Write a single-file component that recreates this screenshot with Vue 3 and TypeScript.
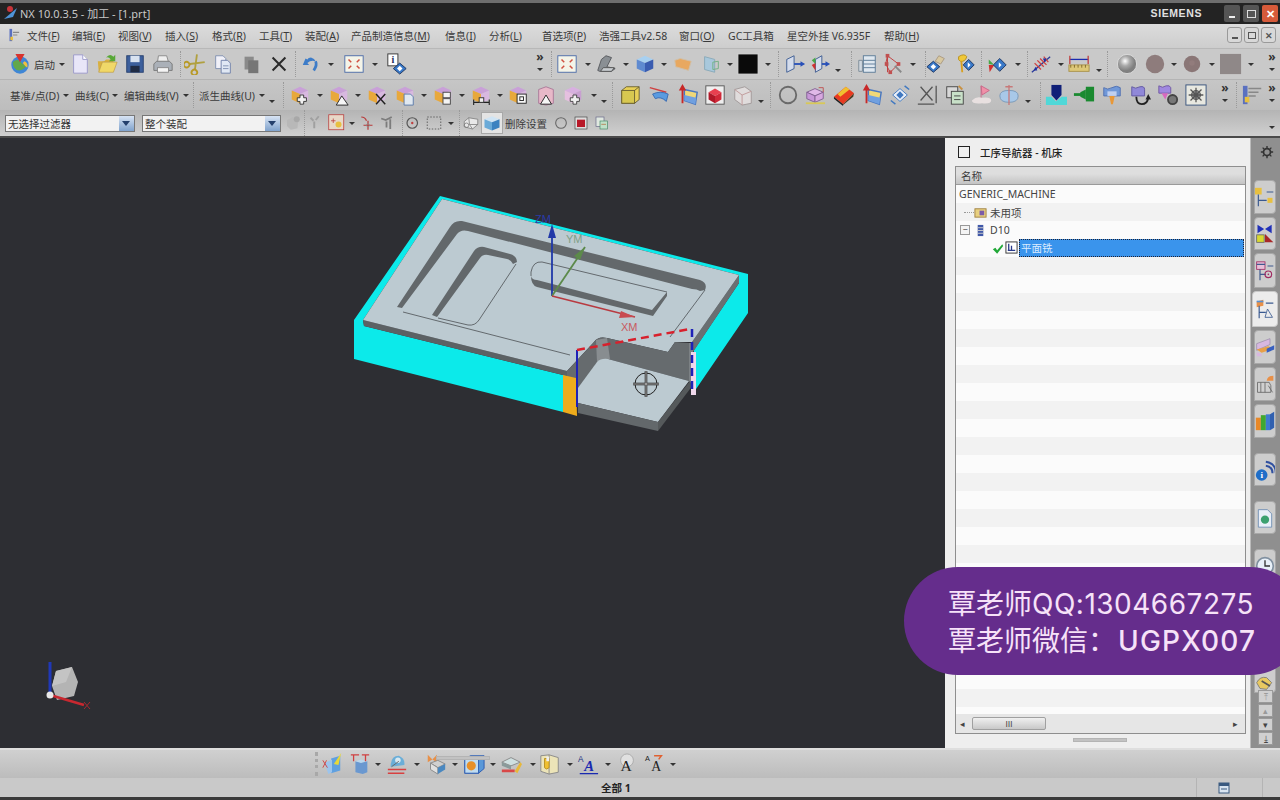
<script setup lang="ts">
type Item = { x: number; icon?: string; kind?: 'arrow' | 'low' | 'sep' | 'more' | 'text' | 'grip'; text?: string; w?: number; box?: boolean }
type Placed = Item & { w: number; gap: number }

const poly = (p: string, f: string, extra = '') => `<polygon points="${p}" fill="${f}" ${extra}/>`
const path = (d: string, f: string, s = 'none', sw = 1) => `<path d="${d}" fill="${f}" stroke="${s}" stroke-width="${sw}"/>`
const rect = (x: number, y: number, w: number, h: number, f: string, s = 'none') => `<rect x="${x}" y="${y}" width="${w}" height="${h}" fill="${f}" stroke="${s}"/>`
const circ = (x: number, y: number, r: number, f: string, s = 'none', sw = 1) => `<circle cx="${x}" cy="${y}" r="${r}" fill="${f}" stroke="${s}" stroke-width="${sw}"/>`
const line = (d: string, s: string, sw = 1) => path(d, 'none', s, sw)

const cube = (t: string, l: string, r: string) =>
  poly('3,7 12,3 21,7 12,11', t) + poly('3,7 12,11 12,21 3,17', l) + poly('12,11 21,7 21,17 12,21', r)
const nxCube = cube('#c9a0d8', '#e8a83c', '#d8b8e0')
const pinkCube = cube('#d8b0e0', '#e6c0e0', '#c8a0d0')

const icons: Record<string, string> = {
  logo: circ(12, 13, 9.5, '#3f86d6') + path('M4 10q5-5 9 0t7 1q-2 8-9 8-6 0-7-9z', '#62a84a') + path('M7 1h10l-5 9z', '#d8322e') + path('M17 9q4 2 3 7-3-2-5-5z', '#f0c040'),
  new: path('M5 2h10l5 5v15H5z', '#e8e6f8', '#9a98c8') + path('M15 2v5h5', '#fff', '#9a98c8'),
  open: path('M2 9h7l2-2h8v3H7L3 21z', '#d8b040') + poly('3,21 7,10 23,10 19,21', '#f0d868', 'stroke="#b89030" stroke-width=".6"') + path('M11 5q4-5 8-1l2-2v7h-7l2-2q-2-3-5-2z', '#58a838'),
  save: rect(3, 3, 18, 18, '#3c5f9c', '#27406e') + rect(7, 3, 10, 7, '#d8e2f0') + rect(7, 14, 10, 7, '#202c44'),
  print: path('M7 3h9l2 7H6z', '#eee', '#888') + path('M2 12l3-3h14l3 3v7H2z', '#aab0b8', '#777') + rect(6, 16, 12, 5, '#f4f4f4', '#888'),
  cut: '<g transform="rotate(45 12 12)">' + line('M6 3l10 13M18 3L8 16', '#b0a040', 2) + circ(6, 19, 3, 'none', '#b89a28', 2) + circ(18, 19, 3, 'none', '#b89a28', 2) + '</g>',
  copy: path('M4 3h8l3 3v11H4z', '#f0f0f8', '#7f8fb0') + path('M10 8h7l3 3v11H10z', '#e0e8f4', '#6f80a8') + line('M12 14h6M12 17h6', '#7f8fb0'),
  paste: rect(5, 4, 10, 14, '#8a8a8a') + rect(9, 8, 11, 14, '#767676'),
  del: line('M5 5l14 14M19 5L5 19', '#2a2a2a', 2.2),
  undo: path('M6 6l-3 7 7 0-2-2q4-4 9-2-1-3-5-4-3 0-4 2z', '#3d7cc8') + line('M17 9q2 4-2 10', '#3d7cc8', 3),
  fit: rect(2, 3, 20, 18, '#f4f4e8', '#4a6aa8') + line('M6 7l3 3M18 7l-3 3M6 17l3-3M18 17l-3-3', '#d05040', 1.6),
  info: rect(2, 1, 11, 13, '#fff', '#333') + `<text x="7.5" y="11" font-size="11" font-weight="700" text-anchor="middle" font-family="Liberation Serif, serif" fill="#203060">i</text>` + poly('15,11 22,17 15,23 8,17', '#3878c8', 'stroke="#1d3560"') + poly('15,14 18,17 15,20 12,17', '#fff'),
  shade: path('M3 19l4-12 5-4 6 2-5 10 9 2-4 3H5z', '#8a8f94', '#55585c') + poly('9,16 21,16 18,20 6,20', '#c8ccd0', 'stroke="#555"'),
  bcube: cube('#a8d0f0', '#5f8ad0', '#3a5cb0'),
  fade: path('M3 8l6-2 12 3-3 10-14-4z', '#e8a860', '#d0c0a8'),
  pane: path('M5 4l11 3v14L5 18z', '#a8c8dc', '#88a8b8') + path('M14 10l6-1v8l-6 1z', 'none', '#70b080'),
  black: rect(1, 1, 22, 22, '#0a0a0a', '#dcdcdc'),
  mir1: path('M3 7l8-4v14l-8 4z', '#d4dcec', '#3a5a90') + line('M11 12h10', '#2850b8', 2) + poly('23,12 18,9 18,15', '#2850b8'),
  mir2: path('M7 7l7-4v14l-7 4z', '#d4dcec', '#3a5a90') + line('M14 12h6', '#2850b8', 2) + poly('23,12 18,9 18,15', '#2850b8') + poly('3,8 7,5 7,12', '#48a848') + poly('3,13 7,11 7,19', '#d03030'),
  list: path('M3 8h4v12H3z', '#d0d8e0', '#7a8a96') + rect(8, 3, 13, 18, '#dfe8f0', '#5a7a96') + line('M8 8h13M8 12h13M8 16h13', '#5a7a96'),
  tree: line('M6 3l12 9-9 9-5-9zM6 3v18', '#c03838') + rect(4, 1, 4, 4, '#c05050') + rect(16, 10, 4, 4, '#c05050') + rect(3, 10, 4, 4, '#c05050') + rect(7, 19, 4, 4, '#c05050') + line('M14 14l7 7', '#888', 2),
  key: path('M14 3l6 3-4 6-6-3z', '#d8c8a0', '#a89880') + poly('8,9 15,15 8,21 1,15', '#3878c8', 'stroke="#1d3560"') + poly('8,12 11,15 8,18 5,15', '#fff'),
  kdia: path('M5 4q6-4 9 0-2 6-7 5-3-1-2-5z', '#f0c838', '#b89020') + line('M8 9l1 12', '#d8a020', 2) + poly('16,7 22,13 16,19 10,13', '#3878c8', 'stroke="#1d3560"') + poly('15,10 18,13 15,16', '#fff'),
  arr3: poly('3,7 9,13 3,12', '#48a848') + poly('3,13 9,13 4,21', '#d03030') + poly('15,6 22,13 15,20 8,13', '#3878c8', 'stroke="#1d3560"') + poly('14,10 17,13 14,16', '#fff'),
  ruler: line('M2 21L22 4', '#2a3a9a', 1.4) + line('M5 11l7 7M8 8l7 7M11 6l7 7M15 4l5 6', '#d04040', 1.4) + poly('4,19 8,19 6,15', '#2030a0') + poly('18,6 14,6 16,10', '#2030a0'),
  meas: rect(1, 13, 22, 7, '#ddc878', '#a89048') + line('M3 13v3M7 13v3M11 13v3M15 13v3M19 13v3', '#806828') + line('M2 7h20', '#1a2ab0', 1.4) + line('M2 3v9M22 3v9', '#c04040', 1.4),
  sphere: `<defs><radialGradient id="sg" cx=".4" cy=".35"><stop offset="0" stop-color="#fff"/><stop offset=".5" stop-color="#aaa"/><stop offset="1" stop-color="#808080"/></radialGradient></defs>` + circ(12, 12, 10.5, 'url(#sg)', '#ddd'),
  dot1: circ(12, 12, 10, '#8e7c7c'),
  dot2: circ(12, 12, 9, '#8a7676') + circ(12, 11, 3, '#927c7c'),
  sq: rect(0, 1, 23, 22, '#8f8888'),
  c1: nxCube + path('M12 12h4v3h3v4h-3v3h-4v-3H9v-4h3z', '#f0f0f0', '#333'),
  c2: nxCube + poly('15,13 22,23 9,23', '#f6f6f6', 'stroke="#222"'),
  c3: nxCube + line('M11 11l10 11M21 11L11 22', '#222', 1.6),
  c4: nxCube + path('M11 11h7l3 3v9H11z', '#e0e8f0', '#5a7aa8'),
  c5: nxCube + rect(12, 9, 8, 6, '#f4f4f4', '#444') + rect(12, 16, 8, 6, '#f4f4f4', '#444'),
  c6: nxCube + line('M4 20h17M4 17v6M21 17v6', '#222', 1.2) + rect(10, 15, 5, 5, '#eee', '#333'),
  c7: nxCube + rect(11, 11, 10, 10, '#f8f8f8', '#222') + rect(14, 14, 4, 4, 'none', '#222'),
  c8: path('M4 6l8-3 8 3v15l-8 2-8-2z', '#e8b8c8', '#a87898') + poly('12,12 18,22 6,22', '#f6f6f6', 'stroke="#222"'),
  c9: pinkCube + path('M12 12h4v3h3v4h-3v3h-4v-3H9v-4h3z', '#f0f0f0', '#444'),
  yb: path('M3 7l5-4h14v14l-5 4H3z', '#e8d058', '#6a6030') + rect(3, 7, 14, 14, '#d8c850', '#6a6030') + line('M17 7l5-4', '#6a6030'),
  sw: path('M2 4l18 5', 'none', '#d04040', 1.6) + path('M5 11q8-4 17 0l-2 8q-6-6-12-3z', '#5a9be0', '#3a6ab0'),
  ext: path('M8 6l14 3-2 13L8 18z', '#f0d878', '#4a78c0', 1.6) + line('M6 21V3', '#c82828', 2) + poly('6,0 2,7 10,7', '#c82828') + path('M8 12l13 3-1 7-12-4z', '#70a0e0'),
  red: rect(2, 2, 20, 20, '#eee', '#555') + poly('5,9 12,5 19,9 12,13', '#e84050') + poly('5,9 12,13 12,21 5,17', '#b01828') + poly('12,13 19,9 19,17 12,21', '#d02838'),
  ghost: path('M3 6l11-3 7 5v13l-10 2-8-6z', '#e0dcdc', '#a09898') + line('M3 6l8 6v11M11 12l10-4', '#c09898'),
  ring: circ(12, 12, 9, 'none', '#6a6a6a', 2),
  pcube: poly('3,9 12,5 21,9 12,13', '#e0b8e8', 'stroke="#806090"') + poly('3,9 12,13 12,20 3,16', '#c898d8', 'stroke="#806090"') + poly('12,13 21,9 21,16 12,20', '#d8a8e0', 'stroke="#806090"') + rect(2, 20, 21, 2, '#d8c858') + line('M16 4h5v5', '#c05050'),
  stripe: poly('1,14 14,3 23,10 11,22', '#e83a20') + poly('5,11 14,3 18,6 8,14', '#f0c030') + poly('11,22 23,10 22,14 11,23', '#4a3a20') + poly('1,14 11,22 11,24 1,16', '#202020'),
  ext2: path('M8 6l14 3-2 13L8 18z', '#f0d878', '#4a78c0', 1.6) + line('M6 21V3', '#c82828', 2) + poly('6,0 2,7 10,7', '#c82828') + path('M8 12l13 3-1 7-12-4z', '#70a0e0'),
  diag: poly('12,5 20,12 12,19 4,12', '#e8eef8', 'stroke="#4078c0"') + poly('12,8 16,12 12,16 8,12', '#4078c0') + line('M17 2l5 4M2 18l5 4', '#4078c0', 1.6),
  xdim: line('M5 3l13 15M18 3L5 18M22 2v19M2 22h18', '#555', 1.4),
  cards: rect(3, 3, 12, 12, '#d8d8d8', '#444') + rect(8, 8, 13, 14, '#c8e0c8', '#444') + line('M11 13h7M11 17h7', '#444') + path('M16 2l4 4', 'none', '#c89040', 2),
  flag: path('M11 2l9 5-8 5z', '#f090a8', '#c86888') + line('M11 2v14', '#c86888') + path('M1 18q5-5 11-3 10-1 10 3t-10 3q-11 1-11-3z', '#e8e0e0'),
  mbox: path('M2 13q0-6 10-6t10 6q0 7-10 7T2 13z', '#a8c8e8', '#7898b8') + line('M12 1v22M8 3h8', '#c87878', 1.4),
  tool1: rect(7, 1, 11, 11, '#102078') + poly('7,12 18,12 12.5,18', '#102078') + poly('1,14 7,14 12,19 18,14 24,14 24,23 1,23', '#50d8d8'),
  tool2: rect(14, 3, 9, 16, '#1a8a30') + poly('14,6 14,17 8,14 8,9', '#1a8a30') + rect(1, 10, 8, 3, '#1a8a30'),
  tool3: path('M3 4q4 3 9 0t9 0v9H3z', '#7098d8', '#5070b0') + rect(7, 8, 10, 5, '#c0d0f0') + poly('9,13 15,13 13,22 11,22', '#e89838'),
  tool4: path('M3 3q4 3 9 0 5-1 5 3v7H3z', '#9088d8', '#6058a0') + line('M8 14q0 8 6 8t7-7', '#222', 2) + poly('21,11 24,17 18,17', '#222'),
  tool5: path('M2 2q4 3 8 0 4-1 5 2v6H2z', '#a088e0', '#7058a0') + poly('5,10 12,10 9,17', '#d868c0') + circ(17, 17, 5, '#777', '#444', 2),
  gear: rect(1, 1, 22, 22, '#e8e8e0', '#35507a') + circ(12, 12, 5, '#888', '#555') + line('M12 4v16M4 12h16M6 6l12 12M18 6L6 18', '#555', 1.4),
  wing: rect(1, 2, 5, 20, '#5a70c0') + rect(3, 14, 5, 6, '#e8c040') + line('M7 5h14M7 9h11M7 13h8', '#888', 1.6),
  gcube: path('M4 8l8-4 7 3-1 12-9 2-5-5z', '#b8b8b8') + circ(17, 7, 4, '#a8a8a8'),
  gray1: line('M2 5l4 4M13 3l-4 5M7 10v9', '#a0a0a0', 2.6),
  bpt: rect(1, 1, 20, 20, '#e8d8c8', '#b83838') + line('M7 6v6M4 9h6', '#b83838') + circ(14, 14, 4, '#e8c040'),
  redc: line('M3 4q5 0 7 5M12 9v12M6 15h12', '#b83838', 1.6) + circ(12, 15, 2, 'none', '#888'),
  gray2: line('M3 6l6 2 8-4M15 7v13M10 10v8', '#7c7c7c', 2.4),
  dotc: circ(11, 12, 7, 'none', '#555', 1.6) + circ(11, 12, 1.6, '#c04040'),
  dash: `<rect x="3" y="4" width="18" height="16" fill="none" stroke="#444" stroke-dasharray="2 2"/>`,
  sel1: path('M3 10l6-5 12 2v7l-7 6-11-3z', '#e8e8e8', '#777') + path('M9 5l1 9 11 0M10 14l4 6', 'none', '#777') + circ(6, 15, 3, 'none', '#777'),
  sel2: poly('2,7 12,3 22,7 12,11', '#cfe4f4') + poly('2,7 12,11 12,22 2,18', '#6aaad8') + poly('12,11 22,7 22,18 12,22', '#3c82c0'),
  ring2: circ(12, 12, 8, 'none', '#666', 1.6),
  rcube: rect(3, 3, 18, 18, '#ddd', '#444') + rect(6, 7, 12, 11, '#b81828'),
  mini: rect(3, 3, 12, 14, '#e0e8e0', '#668') + rect(9, 9, 11, 12, '#c0e0c8', '#486') + line('M11 14h7', '#b06030'),
  b1: path('M11 6l10-3v16l-10 3z', '#5fa0e0') + path('M4 11l8-4v14l-4 2z', '#9cc4ec') + line('M2 8l5 8M2 16l4-8', '#d04040') + poly('14,12 22,0 19,13', '#e8d838'),
  b2: path('M7 9h13v12l-5 2-8-2z', '#6a98d0') + path('M7 9l6-2 7 2-7 2z', '#bcd8ee') + line('M2 2h9M5 2v7M14 2h8M18 2v7', '#d04040', 1.4),
  b3: path('M5 15q0-12 9-12 7 3 6 10z', '#6aaed8') + circ(13, 8, 3, '#d8e8f0') + line('M2 18h20M2 22h18', '#d84040', 1.6) + line('M6 15L14 9', '#666'),
  b4: poly('3,2 8,7 3,10', '#e89048') + poly('13,2 8,7 13,10', '#e89048') + poly('6,11 14,8 22,12 14,16', '#d0d0d0', 'stroke="#888"') + poly('6,11 14,16 14,23 6,18', '#e0e0e0', 'stroke="#888"') + poly('14,16 22,12 22,18 14,23', '#4a88c0'),
  b5: poly('2,7 8,3 23,3 23,17 17,22 2,22', '#5a98d8', 'stroke="#2a5ab0"') + rect(2, 7, 15, 15, '#c0dcf0', '#2a5ab0') + circ(9, 14, 5, '#e89028'),
  b6: poly('2,10 12,5 22,10 12,14', '#cfe0e0', 'stroke="#888"') + poly('2,10 12,14 12,18 2,14', '#8a9a9a') + poly('2,18 16,18 16,21 2,21', '#d84848') + poly('16,20 22,10 24,12 19,22', '#e8b838'),
  b7: path('M2 3l9-1 10 3v16l-10 2-9-3z', '#ece4b8', '#888') + line('M11 2v21', '#888') + path('M6 6h5v10q-3 3-5 0z', '#f0c030', '#b89020') + rect(8, 4, 3, 5, '#eee'),
  a1: `<text x="1" y="10" font-size="9" font-family="Liberation Sans, sans-serif" fill="#203080">A</text><text x="8" y="20" font-size="16" font-weight="700" font-style="italic" font-family="Liberation Serif, serif" fill="#1a2ab0">A</text>` + line('M3 22.5h20', '#1a2ab0', 1.4),
  a2: circ(12, 8, 7, '#e0e0e0', '#aaa') + `<text x="5" y="20" font-size="17" font-family="Liberation Serif, serif" fill="#222">A</text>`,
  a3: `<text x="1" y="9" font-size="8" font-family="Liberation Sans, sans-serif" fill="#222">A</text><text x="8" y="20" font-size="15" font-family="Liberation Serif, serif" fill="#222">A</text>` + line('M11 3h8l-3 4', '#e06030', 1.6),
  t1: rect(0, 1, 8, 8, '#e8c040') + rect(15, 13, 6, 6, '#e8c040') + line('M4 9v14M4 16h10M14 6h8', '#3a5a90', 1.4),
  t2: poly('3,1 11,6 3,11', '#2030b8') + poly('20,1 12,6 20,11', '#2030b8') + rect(2, 13, 9, 9, '#d8d830', '#666') + poly('12,12 22,22 12,22', '#a82828'),
  t3: rect(2, 1, 10, 9, '#e8c0d8', '#a02860') + line('M2 4h10M15 6h7M6 10v13M6 16h7', '#405a90', 1.4) + circ(16, 16, 4, 'none', '#a02860', 1.4) + circ(16, 16, 1, '#a02860'),
  t4: poly('2,3 10,1 10,8 2,10', '#e89048') + rect(2, 2, 8, 2, '#5a90d0') + line('M5 8v15M5 16h8M13 5h9', '#3a5a90', 1.4) + poly('15,12 21,22 12,22', 'none', 'stroke="#3a5a90"'),
  t5: path('M2 8l16-6v7L2 16z', '#d8b8e0', '#a090b0') + path('M2 15l14-4 6 3-14 5z', '#e8a048') + poly('14,14 23,10 23,15 14,19', '#3860c0') + path('M2 18l6 2 0 3H2z', '#d8b8e0'),
  t6: path('M3 10h14l2 4v8H3z', '#d0d0d0', '#666') + line('M7 10v12M12 10v12M16 14l5 8', '#666') + path('M14 8q1-6 8-6v6z', '#e89048'),
  t7: rect(1, 8, 6, 15, '#e88828') + rect(7, 5, 6, 18, '#40a830') + rect(13, 4, 5, 19, '#3f7ad0') + poly('18,4 23,1 23,20 18,23', '#3060b0'),
  t8: path('M1 18a7 7 0 1 1 14 0 7 7 0 0 1-14 0z', '#1f6ec8') + `<text x="8" y="22" text-anchor="middle" font-size="11" font-weight="700" font-family="Liberation Serif, serif" fill="#fff">i</text>` + line('M13 7q8 1 8 9M13 2q12 2 12 14', '#3050a0', 2.4),
  t9: path('M4 2h11l5 5v16H4z', '#e8eef8', '#6888b0') + circ(12, 14, 5, '#3ca070'),
  t10: circ(12, 12, 10, '#e8f0f8', '#8090a0', 2) + line('M12 5v7h6', '#333', 1.6),
  t11: rect(3, 3, 18, 18, '#d8d8d8', '#888'),
  t12: path('M2 14q4-8 12-6l6 6-6 8-8-1z', '#e8c860', '#777') + path('M8 12l10 6', 'none', '#555', 2),
}

// turns screen centres into flow gaps, so a row stays an ordinary flex row
function place(items: Item[], start = 0): Placed[] {
  let right = start
  return items.map((item) => {
    const w = item.w ?? (item.kind === 'arrow' || item.kind === 'low' ? 6 : item.kind === 'sep' ? 1 : item.kind === 'more' ? 8 : item.kind === 'grip' ? 4 : 22)
    const left = item.x - w / 2
    const gap = left - right
    right = left + w
    return { ...item, w, gap }
  })
}

const ic = (x: number, icon: string, extra: Partial<Item> = {}): Item => ({ x, icon, ...extra })
const ar = (x: number): Item => ({ x, kind: 'arrow' })
const lo = (x: number): Item => ({ x, kind: 'low' })
const se = (x: number): Item => ({ x, kind: 'sep' })
const mo = (x: number): Item => ({ x, kind: 'more' })
const tx = (x: number, text: string, w: number): Item => ({ x: x + w / 2, kind: 'text', text, w })

const row1 = place([
  ic(20, 'logo'), tx(34, '启动', 24), ar(62), ic(80, 'new'), ic(107, 'open'), ic(135, 'save'), ic(163, 'print'),
  se(180), ic(195, 'cut'), ic(223, 'copy'), ic(251, 'paste'), ic(279, 'del'), se(295), ic(311, 'undo'), ar(331),
  ic(354, 'fit'), ar(375), ic(397, 'info'), mo(540), se(551), ic(567, 'fit'), ar(588), ic(606, 'shade'), ar(626),
  ic(645, 'bcube'), ar(664), ic(683, 'fade'), ic(711, 'pane'), ar(730), ic(748, 'black'), ar(768), se(778), ic(795, 'mir1'),
  ic(820, 'mir2'), lo(838), se(851), ic(867, 'list'), ic(893, 'tree'), ar(913), se(925), ic(937, 'key'), ic(965, 'kdia'),
  se(981), ic(997, 'arr3'), ar(1018), se(1027), ic(1041, 'ruler'), ar(1061), ic(1079, 'meas'), lo(1099), se(1107),
  ic(1127, 'sphere'), ic(1155, 'dot1'), ar(1174), ic(1192, 'dot2'), ar(1212), ic(1231, 'sq'), ar(1251), mo(1272),
])

const row2 = place([
  tx(10, '基准/点(D)', 51), ar(66), tx(75, '曲线(C)', 36), ar(115), tx(124, '编辑曲线(V)', 56), ar(186), se(193),
  tx(199, '派生曲线(U)', 58), ar(262), lo(272), se(283), ic(300, 'c1'), ar(320), ic(339, 'c2'), ar(358), ic(377, 'c3'),
  ic(405, 'c4'), ar(424), ic(443, 'c5'), ar(462), ic(481, 'c6'), ar(500), ic(518, 'c7'), ic(546, 'c8'), ic(573, 'c9'), ar(594),
  lo(604), se(612), ic(630, 'yb'), ic(659, 'sw'), ic(688, 'ext'), ic(715, 'red'), ic(743, 'ghost'), lo(761), se(770),
  ic(788, 'ring'), ic(815, 'pcube'), ic(844, 'stripe'), ic(872, 'ext2'), ic(900, 'diag'), ic(927, 'xdim'), ic(955, 'cards'),
  ic(982, 'flag'), ic(1009, 'mbox'), lo(1028), se(1040), ic(1056, 'tool1'), ic(1084, 'tool2'), ic(1112, 'tool3'), ic(1140, 'tool4'),
  ic(1168, 'tool5'), ic(1196, 'gear'), mo(1225), se(1236), ic(1253, 'wing'), mo(1272),
])

const row3 = place([
  ic(293, 'gcube', { w: 18 }), se(304), ic(318, 'gray1', { w: 18 }), ic(337, 'bpt', { w: 18 }), ar(352), ic(368, 'redc', { w: 18 }),
  ic(388, 'gray2', { w: 18 }), se(402), ic(413, 'dotc', { w: 18 }), ic(434, 'dash', { w: 18 }), ar(451), se(459), ic(471, 'sel1', { w: 18 }),
  ic(492, 'sel2', { w: 22, box: true }), tx(505, '删除设置', 44), ic(561, 'ring2', { w: 16 }), ic(581, 'rcube', { w: 16 }), ic(602, 'mini', { w: 16 }),
], 281)

const bottomRow = place([
  { x: 317, kind: 'grip' }, ic(332, 'b1'), ic(360, 'b2'), ar(378), ic(397, 'b3'), ar(417), ic(436, 'b4'), ar(455), ic(474, 'b5'), ar(493),
  ic(511, 'b6'), ar(533), ic(550, 'b7'), ar(570), ic(588, 'a1'), ar(608), ic(627, 'a2'), ic(655, 'a3'), ar(673),
])

const menus = [
  ['文件', 'F', 45], ['编辑', 'E', 46], ['视图', 'V', 47], ['插入', 'S', 47], ['格式', 'R', 47], ['工具', 'T', 46], ['装配', 'A', 46],
  ['产品制造信息', 'M', 94], ['信息', 'I', 44], ['分析', 'L', 53], ['首选项', 'P', 57], ['浩强工具v2.58', '', 80], ['窗口', 'O', 49],
  ['GC工具箱', '', 59], ['星空外挂 V6.935F', '', 97], ['帮助', 'H', 40],
] as const

const tabs = [
  { t: 'tab0', icon: 't1', h: 34 }, { t: 'tab', icon: 't2', h: 33 }, { t: 'tab', icon: 't3', h: 35 }, { t: 'active', icon: 't4', h: 36 },
  { t: 'tab', icon: 't5', h: 34 }, { t: 'tab', icon: 't6', h: 34 }, { t: 'tab', icon: 't7', h: 34 }, { t: 'far', icon: 't8', h: 33 },
  { t: 'far', icon: 't9', h: 33 }, { t: 'far', icon: 't10', h: 33 }, { t: 'far', icon: 't11', h: 33 }, { t: 'far last', icon: 't12', h: 51 },
]

const treeRows = Array.from({ length: 26 }, (_, i) => i)
</script>

<template>
  <div class="app">
    <div class="title-bar">
      <svg class="title-logo" viewBox="0 0 16 16"><path d="M1 14 L14 3 L10 12 Z" fill="#4f94d8" /><circle cx="7" cy="4" r="3" fill="#c8343a" /></svg>
      <span class="title-text">NX 10.0.3.5 - 加工 - [1.prt]</span>
      <span class="siemens">SIEMENS</span>
      <div class="win-btns">
        <span class="win-btn"><i class="w-min"></i></span>
        <span class="win-btn"><i class="w-max"></i></span>
        <span class="win-btn close">✕</span>
      </div>
    </div>

    <div class="menu-bar">
      <svg class="menu-icon" viewBox="0 0 16 16"><rect x="4" y="1" width="3" height="14" fill="#5a70c0" /><rect x="5" y="10" width="3" height="4" fill="#e8c040" /><path d="M8 5h7M8 8h5" stroke="#888" stroke-width="1.4" /></svg>
      <span v-for="m in menus" :key="m[0]" class="menu-item" :style="{ width: m[2] + 'px' }">{{ m[0] }}<template v-if="m[1]">(<u>{{ m[1] }}</u>)</template></span>
      <div class="mdi-btns">
        <span class="mdi-btn"><i class="m-min"></i></span>
        <span class="mdi-btn"><i class="m-max"></i></span>
        <span class="mdi-btn x">✕</span>
      </div>
    </div>

    <div class="toolbar t1">
      <template v-for="(it, i) in row1" :key="i">
        <svg v-if="it.icon" class="icon" viewBox="0 0 24 24" :style="{ marginLeft: it.gap + 'px', width: it.w + 'px', height: it.w + 'px' }" v-html="icons[it.icon]"></svg>
        <span v-else :class="['cell', it.kind]" :style="{ marginLeft: it.gap + 'px', width: it.w + 'px' }">{{ it.text }}</span>
      </template>
    </div>

    <div class="toolbar t2">
      <template v-for="(it, i) in row2" :key="i">
        <svg v-if="it.icon" class="icon" viewBox="0 0 24 24" :style="{ marginLeft: it.gap + 'px', width: it.w + 'px', height: it.w + 'px' }" v-html="icons[it.icon]"></svg>
        <span v-else :class="['cell', it.kind]" :style="{ marginLeft: it.gap + 'px', width: it.w + 'px' }">{{ it.text }}</span>
      </template>
    </div>

    <div class="toolbar t3">
      <div class="select s-a"><span>无选择过滤器</span><b></b></div>
      <div class="select s-b"><span>整个装配</span><b></b></div>
      <template v-for="(it, i) in row3" :key="i">
        <span v-if="it.box" class="boxed" :style="{ marginLeft: it.gap + 'px' }">
          <svg class="icon b-icon" viewBox="0 0 24 24" v-html="icons[it.icon!]"></svg>
        </span>
        <svg v-else-if="it.icon" class="icon" viewBox="0 0 24 24" :style="{ marginLeft: it.gap + 'px', width: it.w + 'px', height: it.w + 'px' }" v-html="icons[it.icon]"></svg>
        <span v-else :class="['cell', it.kind]" :style="{ marginLeft: it.gap + 'px', width: it.w + 'px' }">{{ it.text }}</span>
      </template>
      <span class="t3-end"></span>
    </div>

    <div class="main">
      <div class="viewport">
        <svg class="scene" viewBox="0 138 945 610">
          <polygon points="440,196 748,274 748,313 694,392 694,350 739,283 739,275 442,199 363,320 364,326 567,376 563,376 563,412 354,359 354,320" fill="#0ceaea" />
          <polygon points="363,320 567,371 567,376 364,326" fill="#5c6164" />
          <polygon points="739,275 739,283 693,352 692,342" fill="#6a6f72" />
          <path d="M442 199 L739 275 L692 342 L675 342 L668 352 L607 338 Q598 336 594 342 L567 371 L363 320 Z" fill="#bccad1" />
          <path d="M397 307 L450 227 Q454 220 462 221 L700 280 Q708 283 705 290 L700 291 Q697 289 692 289 L468 231 Q461 229 457 234 L402 308 Z" fill="#63686b" />
          <path d="M403 312 L570 355 M705 290 L670 337" fill="none" stroke="#4c5154" stroke-width=".8" />
          <path d="M432 315 L474 251 Q478 246 484 247 L510 254 Q517 256 517 262 L513 264 Q511 260 507 259 L488 255 Q483 254 480 258 L437 317 Z" fill="#63686b" />
          <path d="M516 264 L479 320 Q475 326 468 325 L438 318" fill="none" stroke="#4c5154" stroke-width=".8" />
          <path d="M531 276 Q532 280 537 280 L652 310 L667 292 L667 296 L653 316 L537 287 Q531 285 531 276 Z" fill="#63686b" />
          <path d="M667 292 L542 262 Q533 261 531 272 Q531 276 531 276" fill="none" stroke="#4c5154" stroke-width=".8" />

          <path d="M567 371 L594 342 Q598 336 607 338 L668 352 L675 342 L689 343 L689 381 L608 359 Q600 358 596 364 L576 393 L567 376 Z" fill="#666b6e" />
          <polygon points="596,340 607,338 610,359 597,362" fill="#888d90" />
          <path d="M578 403 L575 392 L597 362 Q601 358 608 359 L689 381 L658 422 Z" fill="#bccad1" />
          <polygon points="578,403 658,422 658,431 578,413" fill="#63686b" />
          <polygon points="658,422 690,381 693,385 658,431" fill="#55595b" />
          <polygon points="689,343 693,343 693,385 689,381" fill="#7c8184" />

          <polygon points="563,375 576,378 577,416 563,412" fill="#eeac1c" />
          <rect x="691" y="352" width="5" height="43" fill="#f0d8ec" />
          <path d="M577 407 V350" fill="none" stroke="#1e22b8" stroke-width="2" />
          <path d="M577 350 L690 329" fill="none" stroke="#d8202c" stroke-width="2.5" stroke-dasharray="8 5" />
          <path d="M692 329 V394" fill="none" stroke="#1e22b8" stroke-width="2.5" stroke-dasharray="8 5" />

          <path d="M552 296 V232" stroke="#2038a8" stroke-width="1.8" fill="none" />
          <polygon points="552,224 548,238 556,238" fill="#2038a8" />
          <text x="535" y="223" class="ax" fill="#2a3aa8">ZM</text>
          <path d="M552 296 L585 247" stroke="#5c8a4a" stroke-width="1.8" fill="none" />
          <polygon points="585,247 574,256 580,260" fill="#5c8a4a" />
          <text x="566" y="243" class="ax" fill="#7f9f86">YM</text>
          <path d="M552 296 L635 317" stroke="#b83a40" stroke-width="1.5" fill="none" />
          <polygon points="635,317 621,311 619,318" fill="#c84a50" />
          <text x="621" y="331" class="ax" fill="#c85a60">XM</text>

          <circle cx="646" cy="384" r="11" fill="none" stroke="#222" stroke-width="1" />
          <path d="M646 371 V397 M633 384 H659" fill="none" stroke="#111" stroke-width="2.5" />
          <path d="M646 371 V397 M633 384 H659" fill="none" stroke="#eee" stroke-width=".8" />

          <polygon points="56,671 72,667 78,682 74,696 57,700 52,686" fill="#b4b4b4" />
          <polygon points="56,671 72,667 66,682 52,686" fill="#c4c4c4" />
          <path d="M50 694 V662" stroke="#2038b8" stroke-width="3" fill="none" />
          <path d="M50 695 L84 705" stroke="#c82830" stroke-width="2.5" fill="none" />
          <path d="M84 702 L90 709 M90 702 L84 709" stroke="#a82830" stroke-width="1" fill="none" />
          <circle cx="50" cy="695" r="3.5" fill="#e8e8e8" />
        </svg>
      </div>

      <div class="navigator">
        <div class="nav-title">
          <span class="nav-check"></span>
          <span>工序导航器 - 机床</span>
        </div>
        <div class="tree">
          <div class="tree-head">名称</div>
          <div class="tree-body">
            <div class="tree-row"><span class="lbl root">GENERIC_MACHINE</span></div>
            <div class="tree-row alt">
              <span class="dash-line"></span>
              <svg class="node" viewBox="0 0 14 14"><rect x="1" y="3" width="12" height="9" fill="#e8d080" stroke="#a08040" /><rect x="6" y="5" width="5" height="5" fill="#7a5aa8" /></svg>
              <span class="lbl">未用项</span>
            </div>
            <div class="tree-row">
              <span class="expander">−</span>
              <svg class="node d10" viewBox="0 0 14 14"><rect x="4" y="1" width="6" height="12" fill="#4058a8" /><path d="M4 4h6M4 7h6M4 10h6" stroke="#ccc" /></svg>
              <span class="lbl">D10</span>
            </div>
            <div class="tree-row sel-row">
              <svg class="check" viewBox="0 0 14 14"><path d="M1 8 L4 6 L6 9 L12 2 L13 4 L6 13 Z" fill="#22a838" /></svg>
              <svg class="op" viewBox="0 0 14 14"><rect x="1" y="1" width="12" height="12" fill="#fff" stroke="#333" /><path d="M3 10h8M4 3v7M7 5v5" stroke="#2a3a8a" stroke-width="1.4" /></svg>
              <span class="sel">平面铣</span>
            </div>
            <div v-for="r in treeRows" :key="r" class="tree-row" :class="{ alt: r % 2 === 0 }"></div>
          </div>
          <div class="hscroll">
            <span class="sb-arrow">◂</span>
            <span class="thumb">Ⅲ</span>
            <span class="sb-arrow right">▸</span>
          </div>
        </div>
        <div class="grip"></div>
      </div>

      <div class="resource">
        <svg class="res-gear" viewBox="0 0 16 16"><circle cx="8" cy="8" r="4" fill="none" stroke="#333" stroke-width="2" /><path d="M8 1v3M8 12v3M1 8h3M12 8h3M3 3l2 2M11 11l2 2M13 3l-2 2M5 11l-2 2" stroke="#333" stroke-width="1.6" /></svg>
        <div v-for="tab in tabs" :key="tab.icon" :class="['res-tab', tab.t]" :style="{ height: tab.h + 'px' }">
          <svg class="res-icon" viewBox="0 0 24 24" v-html="icons[tab.icon]"></svg>
        </div>
        <div class="res-btns">
          <span class="res-btn off">⤒</span>
          <span class="res-btn off">▴</span>
          <span class="res-btn">▾</span>
          <span class="res-btn">⤓</span>
        </div>
      </div>

      <div class="promo">
        <div>覃老师<span class="l1">QQ:1304667275</span></div>
        <div>覃老师微信：<span class="l2">UGPX007</span></div>
      </div>
    </div>

    <div class="toolbar bottom">
      <template v-for="(it, i) in bottomRow" :key="i">
        <svg v-if="it.icon" class="icon" viewBox="0 0 24 24" :style="{ marginLeft: it.gap + 'px', width: it.w + 'px', height: it.w + 'px' }" v-html="icons[it.icon]"></svg>
        <span v-else :class="['cell', it.kind]" :style="{ marginLeft: it.gap + 'px', width: it.w + 'px' }"></span>
      </template>
    </div>

    <div class="status">
      <span class="st-text">全部 1</span>
      <span class="st-div"></span>
      <svg class="st-icon" viewBox="0 0 12 12"><rect x="1" y="1" width="10" height="10" fill="#d8e4f0" stroke="#3a5a80" /><rect x="1" y="1" width="10" height="3" fill="#3a5a80" /><path d="M3 7h6" stroke="#3a5a80" /></svg>
    </div>
    <div class="foot"></div>
  </div>
</template>

<style>
html, body { margin: 0; background: #2d2e33; overflow: hidden; }
</style>

<style scoped>
.app {
  width: 1280px;
  height: 800px;
  display: flex;
  flex-direction: column;
  overflow: hidden;
  font-family: "Noto Sans", "Noto Sans CJK SC", sans-serif;
  font-size: 11px;
  color: #3a3a3a;
  background: #c8c8c8;
}

.title-bar {
  height: 24px;
  box-sizing: border-box;
  border-top: 3px solid #6e6e6e;
  background: #232323;
  display: flex;
  align-items: center;
  color: #c8c8c8;
  flex: none;
}
.title-logo { width: 16px; height: 16px; margin: -2px 0 0 3px; }
.title-text { margin: -2px 0 0 1px; font-size: 11px; }
.siemens { margin: -2px 0 0 auto; font-family: "Liberation Sans", sans-serif; font-weight: 700; font-size: 10.5px; letter-spacing: .6px; color: #e0e0e0; }
.win-btns { display: flex; gap: 3px; margin-left: 22px; margin-right: 2px; }
.win-btn {
  width: 16px; height: 17px; background: #555; border-radius: 2px;
  display: flex; align-items: center; justify-content: center; color: #fff;
}
.win-btn.close { background: #d65a3a; font-size: 11px; font-weight: 700; }
.w-min { width: 6px; height: 2px; background: #eee; margin-top: 7px; }
.w-max { width: 7px; height: 6px; border: 1px solid #ddd; }

.menu-bar {
  height: 24px;
  flex: none;
  display: flex;
  align-items: center;
  box-sizing: border-box;
  padding-bottom: 2px;
  background: linear-gradient(#dcdcdc, #cdcdcd);
}
.menu-icon { width: 14px; height: 16px; margin: 0 7px 0 6px; flex: none; }
.menu-item { white-space: nowrap; font-size: 10.5px; flex: none; }
.mdi-btns { margin-left: auto; margin-right: 4px; display: flex; gap: 2px; }
.mdi-btn {
  width: 13px; height: 14px; border: 1px solid #9a9a9a; border-radius: 3px; background: #d8d8d8;
  display: flex; align-items: center; justify-content: center; font-size: 9px; font-weight: 700; color: #555;
}
.m-min { width: 6px; height: 2px; background: #555; margin-top: 6px; }
.m-max { width: 6px; height: 5px; border: 1px solid #555; }

.toolbar {
  flex: none;
  display: flex;
  align-items: center;
  position: relative;
}
.t1 { height: 31px; background: #c9c9c9; border-top: 1px solid #b8b8b8; box-sizing: border-box; }
.t2 { height: 31px; background: linear-gradient(#c6c6c6, #bdbdbd); border-top: 1px solid #b4b4b4; box-sizing: border-box; }
.t3 { height: 28px; background: linear-gradient(#b4b4b4, #d0d0d0); box-sizing: border-box; border-bottom: 2px solid #4a4a4a; }
.bottom { height: 30px; background: linear-gradient(#d0d0d0, #bcbcbc); border-top: 2px solid #dedede; box-sizing: border-box; }

.icon { flex: none; display: block; overflow: hidden; }
.cell { flex: none; display: flex; align-items: center; justify-content: center; box-sizing: border-box; }
.cell.text { white-space: nowrap; justify-content: flex-start; font-size: 10.5px; }
.cell.arrow::before, .cell.low::before {
  content: ""; border-left: 3px solid transparent; border-right: 3px solid transparent; border-top: 3px solid #333;
}
.cell.low { margin-top: 12px; }
.cell.sep { height: 26px; border-left: 1px dotted #9a9a9a; }
.cell.grip { height: 24px; border-left: 3px dotted #a8a8a8; }
.cell.more { height: 24px; flex-direction: column; justify-content: space-between; font-size: 10px; }
.cell.more::before { content: "»"; font-weight: 700; color: #333; line-height: 10px; font-size: 12px; }
.cell.more::after {
  content: ""; border-left: 3px solid transparent; border-right: 3px solid transparent; border-top: 3px solid #333; margin-bottom: 5px;
}

.select {
  height: 17px;
  background: #f2f2f2;
  border: 1px solid #777;
  display: flex;
  align-items: center;
  justify-content: space-between;
  box-sizing: border-box;
  font-size: 10.5px;
  color: #333;
  padding-left: 2px;
  flex: none;
}
.select b { width: 15px; height: 15px; background: linear-gradient(#d8e4f4, #7fa2cc); position: relative; display: block; }
.select b::after {
  content: ""; position: absolute; left: 3px; top: 5px;
  border-left: 4.5px solid transparent; border-right: 4.5px solid transparent; border-top: 5px solid #24406c;
}
.s-a { width: 130px; margin-left: 5px; }
.s-b { width: 139px; margin-left: 7px; }
.boxed { background: #e4e4e4; border: 1px solid #a8a8a8; width: 22px; height: 22px; box-sizing: border-box; display: flex; align-items: center; justify-content: center; flex: none; }
.b-icon { width: 18px; height: 18px; }
.t3-end { position: absolute; right: 5px; top: 16px; border-left: 3px solid transparent; border-right: 3px solid transparent; border-top: 3px solid #333; }

.main { flex: 1; display: flex; position: relative; min-height: 0; overflow: hidden; }
.viewport { width: 945px; flex: none; background: #2d2e33; position: relative; }
.scene { display: block; width: 945px; height: 610px; }
.ax { font-family: "Liberation Sans", sans-serif; font-size: 11px; }

.navigator {
  width: 305px;
  flex: none;
  background: #eeeeee;
  box-sizing: border-box;
  padding: 0 4px 0 10px;
  display: flex;
  flex-direction: column;
}
.nav-title { height: 28px; display: flex; align-items: center; gap: 10px; font-size: 10.5px; color: #222; flex: none; padding-left: 3px; font-weight: 500; }
.nav-check { width: 10px; height: 10px; border: 1px solid #222; background: #f0f0f0; }
.tree { flex: 1; border: 1px solid #8e8e8e; background: #fff; display: flex; flex-direction: column; min-height: 0; }
.tree-head { height: 18px; flex: none; background: linear-gradient(#dedede 40%, #c4c4c4); border-bottom: 1px solid #9a9a9a; padding-left: 5px; line-height: 18px; font-size: 10.5px; box-sizing: border-box; }
.tree-body { flex: 1; overflow: hidden; min-height: 0; }
.tree-row { height: 18px; position: relative; display: flex; align-items: center; background: #fbfbfb; }
.tree-row.alt { background: #f2f2f2; }
.lbl { font-size: 10.5px; color: #444; }
.root { margin-left: 3px; }
.dash-line { position: absolute; left: 8px; top: 9px; width: 10px; border-top: 1px dotted #999; }
.node { position: absolute; left: 18px; top: 3px; width: 13px; height: 13px; }
.tree-row .lbl:not(.root) { margin-left: 34px; }
.expander { position: absolute; left: 4px; top: 4px; width: 8px; height: 8px; border: 1px solid #999; line-height: 7px; text-align: center; font-size: 9px; color: #444; background: #f4f4f4; }
.check { position: absolute; left: 36px; top: 3px; width: 12px; height: 13px; }
.op { position: absolute; left: 49px; top: 2px; width: 13px; height: 13px; }
.sel { position: absolute; left: 63px; right: 1px; top: 0; height: 18px; line-height: 18px; background: #3a94ec; color: #dcecff; padding-left: 2px; font-size: 10.5px; outline: 1px dotted #223; outline-offset: -1px; }
.hscroll { height: 19px; flex: none; background: #e6e6e6; display: flex; align-items: center; font-size: 9px; color: #444; position: relative; }
.sb-arrow { margin-left: 4px; width: 12px; }
.sb-arrow.right { margin-left: auto; }
.thumb { width: 74px; height: 13px; background: linear-gradient(#f0f0f0, #c8c8c8); border: 1px solid #a0a0a0; border-radius: 2px; box-sizing: border-box; text-align: center; line-height: 11px; font-size: 8px; }
.grip { height: 14px; flex: none; position: relative; }
.grip::after { content: ""; position: absolute; left: 118px; top: 4px; width: 54px; height: 4px; background: #c2c2c2; border: 1px solid #b4b4b4; box-sizing: border-box; }

.resource { width: 30px; flex: none; background: #8f8f8f; border-left: 1px solid #bbb; box-sizing: border-box; display: flex; flex-direction: column; align-items: flex-start; position: relative; padding-left: 3px; }
.res-gear { width: 14px; height: 14px; margin: 7px 0 0 6px; flex: none; }
.res-tab { width: 22px; background: #cdcdcd; border: 1px solid #a8a8a8; border-radius: 4px 4px 4px 0; box-sizing: border-box; display: flex; align-items: center; justify-content: center; flex: none; margin-bottom: 3px; }
.res-tab.tab0 { margin-top: 21px; }
.res-tab.active { background: #ececec; width: 26px; margin-left: -2px; border-color: #c8c8c8; }
.res-tab.far { margin-top: 12px; }
.res-tab.last { align-items: flex-end; margin-top: 9px; }
.res-icon { width: 20px; height: 22px; }
.res-btns { position: absolute; left: 7px; top: 552px; display: flex; flex-direction: column; gap: 1px; }
.res-btn { width: 15px; height: 13px; background: #d0d0d0; border: 1px solid #9a9a9a; box-sizing: border-box; font-size: 9px; line-height: 11px; text-align: center; color: #444; }
.res-btn.off { color: #9a9a9a; }

.promo {
  position: absolute;
  left: 904px;
  top: 429px;
  width: 400px;
  height: 108px;
  border-radius: 54px;
  background: #652d8c;
  color: #f6e2f8;
  box-sizing: border-box;
  padding: 19px 0 0 44px;
  font-family: "Inter", "Noto Sans CJK SC", sans-serif;
  font-size: 28px;
  line-height: 37px;
  white-space: nowrap;
}
.l1 { letter-spacing: .5px; }
.l2 { letter-spacing: 1.2px; font-weight: 500; margin-left: 2px; }

.status { height: 19px; flex: none; background: #c9c9c9; display: flex; align-items: center; position: relative; }
.st-text { margin-left: 601px; font-weight: 700; font-size: 10.5px; color: #222; }
.st-div { margin-left: auto; height: 19px; width: 67px; border-left: 1px solid #b4b4b4; border-right: 1px solid #b4b4b4; box-sizing: border-box; margin-right: 17px; }
.st-icon { width: 12px; height: 12px; position: absolute; left: 1218px; top: 4px; }
.foot { height: 3px; flex: none; background: #3a3a3a; }
</style>
